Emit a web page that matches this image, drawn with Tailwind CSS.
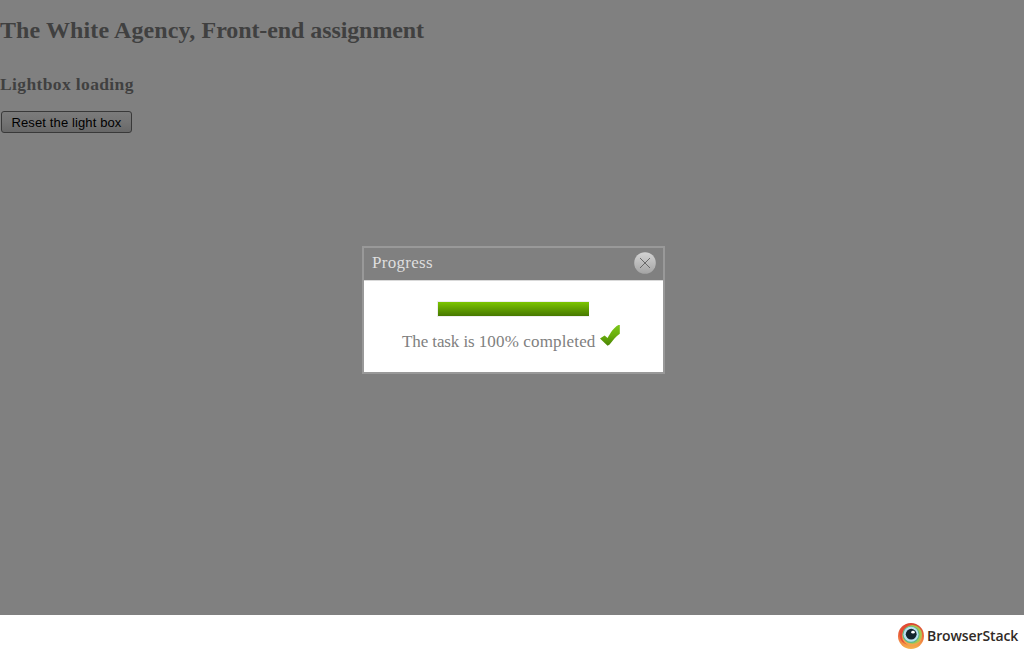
<!DOCTYPE html>
<html lang="en">
<head>
<meta charset="utf-8">
<title>Lightbox loading</title>
<script src="https://cdn.jsdelivr.net/npm/@tailwindcss/browser@4"></script>
</head>
<body class="h-[655px] w-[1024px] overflow-hidden bg-white font-['Liberation_Serif',serif]">
<div class="relative flex h-full flex-col">
  <main class="h-[615px] bg-[#808080] pt-4 text-[#404040]">
    <h1 class="h-7 whitespace-nowrap text-[24px] leading-7 font-bold"><span class="tracking-[0.11px]">The White Agency, </span><span class="tracking-[-0.09px]">Front-end assignment</span></h1>
    <h2 class="mt-[30px] h-5 whitespace-nowrap text-[17.5px] leading-5 font-bold tracking-[0.37px]">Lightbox loading</h2>
    <button class="mt-[17px] ml-px block h-[22px] w-[131px] rounded-[3px] border border-[#393939] bg-linear-to-b from-[#7b7b7b] via-[#747474] to-[#686868] pt-px font-['Liberation_Sans',sans-serif] text-[13px] leading-5 tracking-[0.12px] whitespace-nowrap text-black">Reset the light box</button>
  </main>
  <footer class="flex h-10 items-center justify-end gap-[3px] pt-[2px] pr-[6px]">
    <svg class="size-[26px]" viewBox="0 0 26 26">
      <defs><linearGradient id="ring" x1="0" y1="0" x2="0" y2="1"><stop offset="0" stop-color="#d8432e"/><stop offset=".55" stop-color="#ee7040"/><stop offset="1" stop-color="#f5b44c"/></linearGradient></defs>
      <circle cx="13" cy="13" r="13" fill="url(#ring)"/>
      <circle cx="12" cy="11.5" r="10.5" fill="#e44b35"/>
      <circle cx="14" cy="13" r="10" fill="#f3a44c"/>
      <circle cx="14.5" cy="11.5" r="9.5" fill="#a9c74e"/>
      <circle cx="13" cy="11.5" r="8.6" fill="#5fb78b"/>
      <circle cx="13" cy="11.2" r="7.5" fill="#b8dfef"/>
      <circle cx="13.2" cy="11.2" r="5.4" fill="#13242d"/>
      <ellipse cx="15" cy="9.2" rx="1.8" ry="1.4" fill="#fff"/>
    </svg>
    <span class="w-[91px] text-[14px] leading-5 font-semibold tracking-[-0.1px] whitespace-nowrap text-[#302a26] font-['Open_Sans',sans-serif]">BrowserStack</span>
  </footer>

  <section class="absolute top-[246px] left-[362px] flex h-32 w-[303px] flex-col border-2 border-[#999] bg-white">
    <header class="flex h-[33px] items-center justify-between border-b border-[#d9d9d9] bg-[#808080] pr-[7px] pb-[2px] pl-2 text-[#dedede]">
      <span class="text-[17px] leading-5 tracking-[0.3px]">Progress</span>
      <svg class="size-[22px]" viewBox="0 0 22 22">
        <defs><linearGradient id="close" x1="0" y1="0" x2="0" y2="1"><stop offset="0" stop-color="#d3d3d3"/><stop offset="1" stop-color="#a4a4a4"/></linearGradient></defs>
        <circle cx="11" cy="11" r="10.8" fill="url(#close)"/>
        <path d="M6 6l10 10M16 6L6 16" stroke="#686868" stroke-width="1"/>
      </svg>
    </header>
    <div class="flex flex-col items-center pt-5">
      <div class="h-4 w-[153px] border border-[#eee] border-r-white bg-linear-to-b from-[#80cc00] to-[#437300] bg-origin-border"></div>
      <div class="mt-[7px] mr-[5px] flex h-7 items-start gap-1">
        <span class="w-[194px] pt-[8px] text-[17px] leading-5 whitespace-nowrap text-[#808080]"><span class="tracking-[-0.1px]">The task is </span><span class="tracking-[0.15px]">100% completed</span></span>
        <svg class="mt-px h-[22px] w-5" viewBox="0 0 20 22">
          <defs><linearGradient id="tick" x1="0" y1="0" x2="0" y2="1"><stop offset="0" stop-color="#7cc71a"/><stop offset=".5" stop-color="#69ae0c"/><stop offset="1" stop-color="#4b8405"/></linearGradient></defs>
          <path d="M0 13.6L4.6 10.6L7.6 13C10.5 8 13.5 2.5 18.5 0H19.8V8.8C15.8 11.4 13 15.5 9.6 19.6L7.6 20.8Q4 17.5 0 13.6Z" fill="url(#tick)"/>
        </svg>
      </div>
    </div>
  </section>
</div>
</body>
</html>
